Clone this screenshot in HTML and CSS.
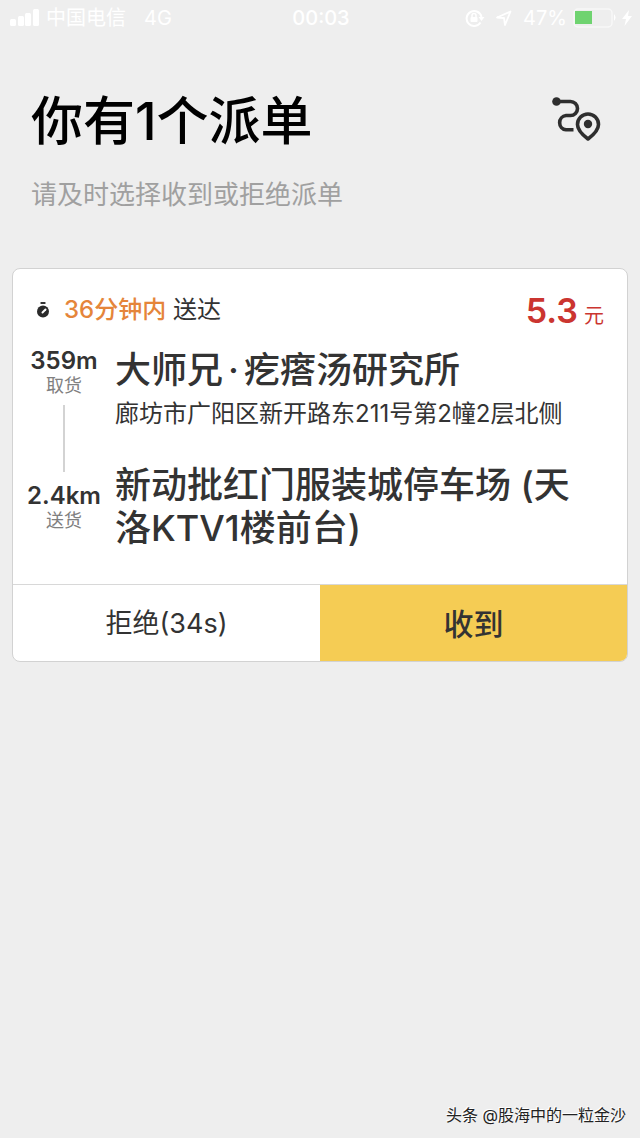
FILE: index.html
```html
<!DOCTYPE html>
<html lang="zh-CN">
<head>
<meta charset="utf-8">
<meta name="viewport" content="width=device-width, initial-scale=1">
<title>派单</title>
<link rel="stylesheet" href="styles.css">
</head>
<body>
<div class="screen">
  <div class="status">
    <div class="status-side">
      <svg class="signal" width="30" height="18" viewBox="0 0 30 18" aria-hidden="true"><rect x="0" y="10" width="6" height="7" rx="1.5"/><rect x="8" y="7" width="6" height="10" rx="1.5"/><rect x="15" y="4" width="6" height="13" rx="1.5"/><rect x="23" y="0" width="6" height="17" rx="1.5"/></svg>
      <span class="carrier">中国电信</span>
      <span class="network">4G</span>
    </div>
    <span class="clock">00:03</span>
    <div class="status-side status-right">
      <svg class="lock" width="20" height="18" viewBox="0 0 20 18" aria-hidden="true"><path d="M15.5 13.5A7.5 7.5 0 1 1 16.5 8" fill="none" stroke="#fff" stroke-width="2"/><path d="M13.5 8h6l-3 4z"/><rect x="5.5" y="8" width="7" height="5" rx="1"/><path d="M7 8V6.500a2 2 0 0 1 4 0V8" fill="none" stroke="#fff" stroke-width="1.500"/></svg>
      <svg class="arrow" width="16" height="16" viewBox="0 0 16 16" aria-hidden="true"><path d="M1 7.500 14.500 1.500 9 15 8 8z" fill="none" stroke="#fff" stroke-width="1.800" stroke-linejoin="round"/></svg>
      <span class="percent">47%</span>
      <svg class="battery" width="43" height="20" viewBox="0 0 43 20" aria-hidden="true"><rect x="1" y="1" width="38" height="18" rx="4" fill="none" stroke="#f8f8f8" stroke-width="1.500"/><rect x="2" y="3" width="17" height="13" fill="#6fd370"/><path d="M41 6q3 3.500 0 7z"/></svg>
      <svg class="bolt" width="10" height="16" viewBox="0 0 10 16" aria-hidden="true"><path d="M7 0 0 9h4L2.500 16 10 6H6z"/></svg>
    </div>
  </div>

  <header class="header">
    <div>
      <h1 class="title">你有1个派单</h1>
      <p class="subtitle">请及时选择收到或拒绝派单</p>
    </div>
    <button class="route" type="button" aria-label="路线">
      <svg width="50" height="46" viewBox="0 0 50 46" fill="none" stroke="#2e2e2e" stroke-width="3.600"><circle cx="5.500" cy="4.500" r="4.300" fill="#2e2e2e" stroke="none"/><path d="M5 4.500H19.500a7 7 0 0 1 0 14H15a7.200 7.200 0 0 0 0 14.300H22.500"/><path d="M37 42C31 37.500 26.500 33 26.500 27.500a10.500 10.500 0 0 1 21 0C47.500 33 43 37.500 37 42Z" stroke-linejoin="round"/><circle cx="37" cy="27" r="4.200" fill="#2e2e2e" stroke="none"/></svg>
    </button>
  </header>

  <main class="card">
    <div class="body">
      <div class="summary">
        <svg class="timer" width="12" height="16" viewBox="0 0 12 16" aria-hidden="true"><rect x="3.500" y="0" width="5" height="2" rx=".6" fill="#333"/><circle cx="6" cy="9.500" r="6" fill="#2b2b2b"/><path d="M5.500 10.500 8.500 7.500" stroke="#fff" stroke-width="2" stroke-linecap="round"/></svg>
        <span><span class="limit">36分钟内</span> 送达</span>
        <span class="price">5.3<span class="unit">元</span></span>
      </div>
      <div class="trip">
        <div class="legs">
          <span class="distance">359m</span>
          <span class="kind">取货</span>
          <span class="line"></span>
          <span class="distance">2.4km</span>
          <span class="kind">送货</span>
        </div>
        <div class="stops">
          <div>
            <h2 class="place">大师兄<span class="dot">·</span>疙瘩汤研究所</h2>
            <p class="address">廊坊市广阳区新开路东211号第2幢2层北侧</p>
          </div>
          <h2 class="place">新动批红门服装城停车场 (天洛KTV1楼前台)</h2>
        </div>
      </div>
    </div>
    <div class="actions">
      <button class="action reject" type="button">拒绝(34s)</button>
      <button class="action accept" type="button">收到</button>
    </div>
  </main>

  <footer class="credit">头条 @股海中的一粒金沙</footer>
</div>
</body>
</html>
```
FILE: styles.css
```css
* {
  box-sizing: border-box;
}

body {
  margin: 0;
  background: #eee;
  color: #333;
  font-family: Inter, "Noto Sans CJK SC", sans-serif;
}

h1, h2, p {
  margin: 0;
}

button {
  border: 0;
  padding: 0;
  background: none;
  color: inherit;
  font-family: inherit;
}

svg {
  display: block;
  flex: none;
}

.screen {
  min-height: 100vh;
  display: flex;
  flex-direction: column;
}

.status {
  display: grid;
  grid-template-columns: 1fr auto 1fr;
  align-items: center;
  height: 36px;
  padding: 0 8px 0 10px;
  color: #fff;
  font-size: 20px;
  line-height: 28px;
}

.status svg {
  fill: #fff;
}

.status-side {
  display: flex;
  align-items: center;
  gap: 6px;
}

.network {
  margin-left: 12px;
}

.clock {
  font-weight: 500;
}

.status-right {
  justify-content: flex-end;
}

.arrow {
  margin: 0 5px;
}

.header {
  display: flex;
  justify-content: space-between;
  align-items: flex-start;
  padding: 50px 39px 0 31px;
}

.title {
  color: #000;
  font-size: 52px;
  font-weight: 500;
  line-height: 72px;
}

.subtitle {
  margin-top: 18px;
  color: #a0a0a0;
  font-size: 26px;
  line-height: 38px;
}

.route {
  margin-top: 11px;
}

.card {
  margin: 54px 12px 0;
  border: 1px solid #d2d2d2;
  border-radius: 8px;
  background: #fff;
  overflow: hidden;
}

.body {
  padding: 14px 23px 34px 16px;
}

.summary {
  display: flex;
  align-items: center;
  gap: 15px;
  padding-left: 8px;
  font-size: 24px;
  line-height: 40px;
}

.limit {
  color: #e5853a;
  font-weight: 500;
}

.price {
  margin-left: auto;
  padding-top: 8px;
  color: #cb3530;
  font-size: 34px;
  font-weight: 600;
}

.unit {
  margin-left: 6px;
  font-size: 20px;
  font-weight: 400;
}

.trip {
  display: grid;
  grid-template-columns: 70px 1fr;
  column-gap: 16px;
  margin-top: 13px;
}

.legs {
  display: flex;
  flex-direction: column;
  align-items: center;
}

.stops {
  display: grid;
  align-content: start;
  gap: 29px;
}

.distance {
  font-size: 24px;
  font-weight: 600;
  line-height: 24px;
}

.kind {
  color: #808080;
  font-size: 18px;
  line-height: 26px;
}

.line {
  width: 2px;
  height: 67px;
  margin: 6px 0 12px;
  background: #d3d3d3;
}

.place {
  font-size: 36px;
  font-weight: 500;
  line-height: 43px;
}

.dot {
  padding: 0 5px;
}

.address {
  font-size: 24px;
  line-height: 43px;
}

.actions {
  display: grid;
  grid-template-columns: 1fr 1fr;
  border-top: 1px solid #d8d8d8;
}

.action {
  height: 76px;
  padding-bottom: 3px;
  font-size: 27px;
}

.accept {
  background: #f5cc54;
  font-size: 30px;
  font-weight: 500;
}

.credit {
  margin-top: auto;
  padding: 0 14px 10px;
  color: #222;
  font-size: 16px;
  line-height: 26px;
  text-align: right;
  text-shadow: -1px -1px 0 #fff;
}
```
